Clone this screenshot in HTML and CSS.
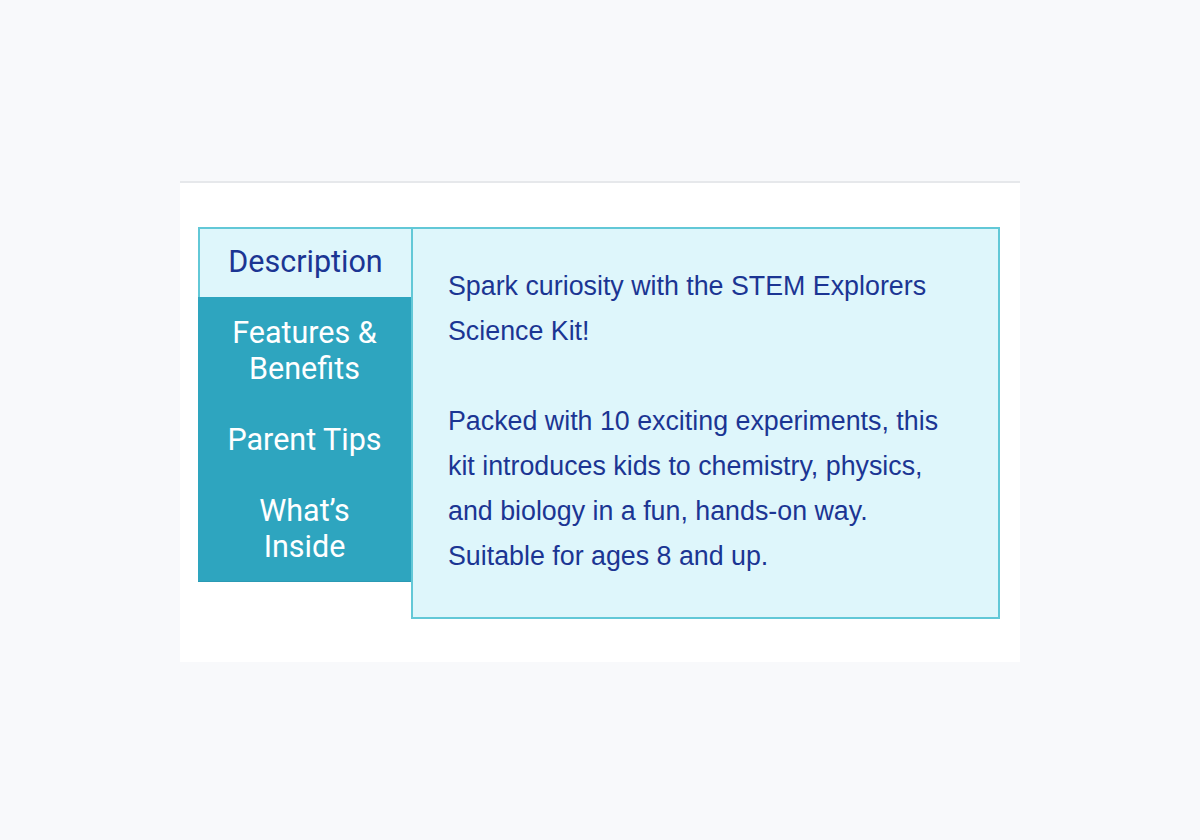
FILE: index.html
```html
<!DOCTYPE html>
<html lang="en">
<head>
<meta charset="utf-8">
<title>STEM Explorers Science Kit</title>
<link rel="stylesheet" href="styles.css">
</head>
<body>
<main class="page">
  <section class="card">
    <div class="tabs">
      <div class="tablist" role="tablist">
        <button class="tab active" role="tab">Description</button>
        <button class="tab" role="tab">Features &amp;<br>Benefits</button>
        <button class="tab" role="tab">Parent Tips</button>
        <button class="tab" role="tab">What’s<br>Inside</button>
      </div>
      <div class="panel" role="tabpanel">
        <p>Spark curiosity with the STEM Explorers Science Kit!</p>
        <p>Packed with 10 exciting experiments, this kit introduces kids to chemistry, physics, and biology in a fun, hands-on way. Suitable for ages 8 and up.</p>
      </div>
    </div>
  </section>
</main>
</body>
</html>
```

FILE: styles.css
```css
html, body {
  margin: 0;
  padding: 0;
  background: #f8f9fb;
}
.page {
  width: 1200px;
  height: 840px;
  display: flex;
  justify-content: center;
  align-items: flex-start;
  padding-top: 181px;
  box-sizing: border-box;
}
.card {
  width: 840px;
  box-sizing: border-box;
  background: #ffffff;
  border-top: 2px solid #e6e8eb;
  padding: 44px 20px 43px 18px;
}
.tabs {
  display: flex;
  align-items: flex-start;
}
.tablist {
  display: flex;
  flex-direction: column;
  width: 213px;
  flex: none;
}
.tab {
  display: block;
  width: 100%;
  margin: 0;
  border: none;
  background: #2ea5bf;
  color: #ffffff;
  font-family: Roboto, "Liberation Sans", sans-serif;
  font-size: 30.5px;
  line-height: 36px;
  padding: 18px 6px 17px;
  text-align: center;
  cursor: pointer;
}
.tab:last-child {
  border-bottom: 1.5px solid #2a9ab4;
  padding-bottom: 16px;
}
.tab.active {
  background: #def6fb;
  color: #1b3593;
  border-top: 2px solid #62c8d7;
  border-left: 2px solid #62c8d7;
  padding-top: 15px;
}
.panel {
  flex: 1;
  background: #def6fb;
  border: 2px solid #62c8d7;
  padding: 34.5px 36px 38.5px 35px;
  min-height: 313px;
  color: #1b3593;
  font-family: "Liberation Sans", Arial, sans-serif;
  font-size: 26.8px;
  line-height: 45px;
}
.panel p {
  margin: 0 0 45px;
}
.panel p:last-child {
  margin-bottom: 0;
}
```
